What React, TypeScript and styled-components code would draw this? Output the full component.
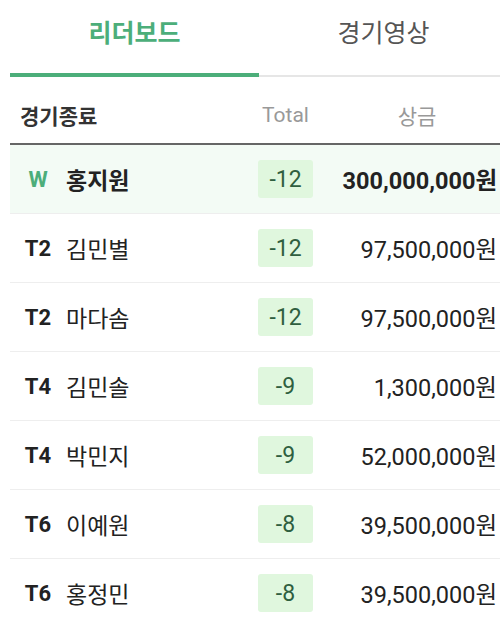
import styled, { createGlobalStyle } from 'styled-components';

interface Entry {
  rank: string;
  name: string;
  total: number;
  prize: number;
  winner?: boolean;
}

const entries: Entry[] = [
  { rank: 'W', name: '홍지원', total: -12, prize: 300000000, winner: true },
  { rank: 'T2', name: '김민별', total: -12, prize: 97500000 },
  { rank: 'T2', name: '마다솜', total: -12, prize: 97500000 },
  { rank: 'T4', name: '김민솔', total: -9, prize: 1300000 },
  { rank: 'T4', name: '박민지', total: -9, prize: 52000000 },
  { rank: 'T6', name: '이예원', total: -8, prize: 39500000 },
  { rank: 'T6', name: '홍정민', total: -8, prize: 39500000 },
];

const GREEN = '#4cae7a';

const GlobalStyle = createGlobalStyle`
  html, body { margin: 0; padding: 0; background: #fff; overflow: hidden; }
  body {
    font-family: Roboto, "Noto Sans CJK KR", "Noto Sans", sans-serif;
    color: #222;
  }
`;

const Page = styled.div`
  width: 500px;
  margin-left: 10px;
`;

const TabList = styled.div`
  display: flex;
  box-shadow: inset 0 -2px 0 #e6e6e6;
`;

const Tab = styled.div<{ $active?: boolean }>`
  flex: 0 0 249px;
  height: 77px;
  display: flex;
  align-items: center;
  justify-content: center;
  padding-bottom: 12px;
  box-sizing: border-box;
  font-size: 25px;
  font-weight: ${p => (p.$active ? 600 : 400)};
  color: ${p => (p.$active ? GREEN : '#555')};
  border-bottom: 4px solid ${p => (p.$active ? GREEN : 'transparent')};
`;

const Grid = styled.div`
  display: grid;
  grid-template-columns: 56px 192px 55px 1fr;
  align-items: center;
  padding-right: 13px;
`;

const HeaderRow = styled(Grid)`
  height: 68px;
  box-sizing: border-box;
  padding-top: 10px;
  border-bottom: 2px solid #666;
`;

const HeadTitle = styled.div`
  grid-column: 1 / 3;
  padding-left: 10px;
  font-size: 21px;
  font-weight: 700;
  color: #333;
`;

const HeadCell = styled.div<{ $pad?: boolean }>`
  text-align: center;
  font-size: 21px;
  color: #999;
  padding-left: ${p => (p.$pad ? '24px' : '0')};
`;

const Row = styled(Grid)<{ $winner?: boolean }>`
  height: 68px;
  border-bottom: 1px solid #eee;
  background: ${p => (p.$winner ? '#f3fbf5' : '#fff')};
`;

const Rank = styled.div<{ $winner?: boolean }>`
  text-align: center;
  font-size: 22px;
  font-weight: 700;
  color: ${p => (p.$winner ? GREEN : '#222')};
`;

const Name = styled.div<{ $winner?: boolean }>`
  font-size: 23px;
  font-weight: ${p => (p.$winner ? 600 : 400)};
  color: #222;
`;

const Badge = styled.div`
  height: 38px;
  display: flex;
  align-items: center;
  justify-content: center;
  border-radius: 3px;
  background: #e0f7de;
  color: #2f5f3f;
  font-size: 23px;
`;

const Prize = styled.div<{ $winner?: boolean }>`
  padding-left: 24px;
  text-align: right;
  font-size: 23.5px;
  font-weight: ${p => (p.$winner ? 700 : 400)};
  color: #222;
  white-space: nowrap;
`;

function won(n: number) {
  return `${n.toLocaleString('en-US')}원`;
}

export default function App() {
  return (
    <Page>
      <GlobalStyle />
      <TabList>
        <Tab $active>리더보드</Tab>
        <Tab>경기영상</Tab>
      </TabList>
      <HeaderRow>
        <HeadTitle>경기종료</HeadTitle>
        <HeadCell>Total</HeadCell>
        <HeadCell $pad>상금</HeadCell>
      </HeaderRow>
      {entries.map((e, i) => (
        <Row key={i} $winner={e.winner}>
          <Rank $winner={e.winner}>{e.rank}</Rank>
          <Name $winner={e.winner}>{e.name}</Name>
          <Badge>{e.total}</Badge>
          <Prize $winner={e.winner}>{won(e.prize)}</Prize>
        </Row>
      ))}
    </Page>
  );
}
